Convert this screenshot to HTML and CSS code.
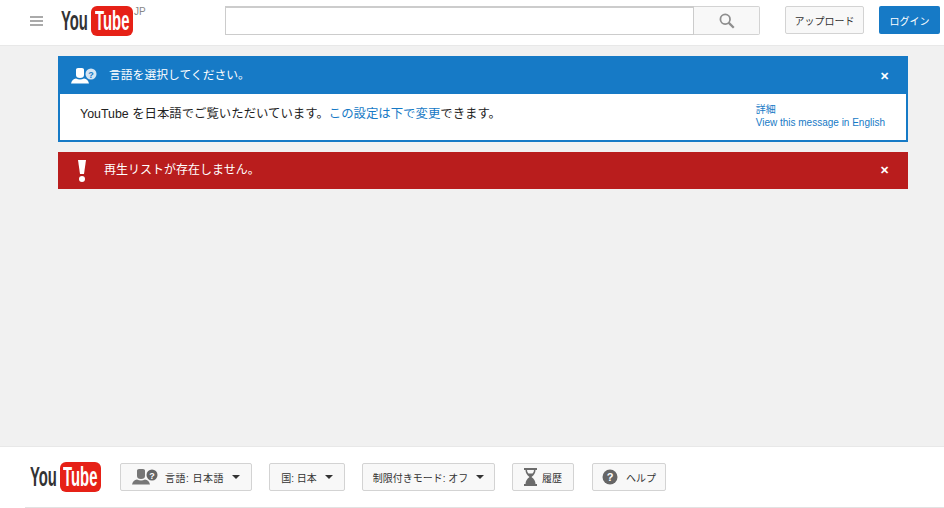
FILE: index.html
```html
<!DOCTYPE html>
<html lang="ja">
<head>
    <meta charset="UTF-8">
    <meta name="viewport" content="width=device-width, initial-scale=1.0">
    <title>YouTube</title>
    <link rel="stylesheet" href="styles.css">
</head>
<body>
    <header class="masthead">
        <div class="guide-icon"><span></span><span></span><span></span></div>
        <a class="logo logo-top" href="#">
            <span class="logo-you"><b>You</b></span><span class="logo-tube"><b>Tube</b></span>
        </a>
        <span class="country">JP</span>
        <form class="search">
            <input class="search-input" type="text">
            <button class="search-btn" type="button">
                <svg width="16" height="16" viewBox="0 0 18 18"><circle cx="7" cy="7" r="5.4" fill="none" stroke="#8e8e8e" stroke-width="2"/><path d="M10.8 10.8 L16.6 16.6" stroke="#8e8e8e" stroke-width="2.6"/></svg>
            </button>
        </form>
        <button class="btn upload-btn">アップロード</button>
        <button class="login-btn">ログイン</button>
    </header>

    <main class="content">
        <div class="notice notice-lang">
            <div class="notice-head">
                <svg class="lang-icon" width="26" height="16" viewBox="0 0 26 16">
                    <path d="M5 1.5 Q5 0 7 0 H11 Q13 0 13 1.5 V7 Q13 10 9 10 Q5 10 5 7 Z M0 15.5 Q1 11 5 10.5 Q9 12.5 13 10.5 Q17 11 18 15.5 Z" fill="#fff"/>
                    <circle cx="20" cy="6" r="5.5" fill="#d5e5f3"/>
                    <text x="20" y="9.5" class="lang-q">?</text>
                </svg>
                <span class="notice-title">言語を選択してください。</span>
                <span class="close">&#10005;</span>
            </div>
            <div class="notice-body">
                <p class="notice-msg">YouTube を日本語でご覧いただいています。<a href="#">この設定は下で変更</a>できます。</p>
                <div class="notice-links">
                    <a href="#">詳細</a>
                    <a href="#">View this message in English</a>
                </div>
            </div>
        </div>

        <div class="notice notice-error">
            <svg class="error-icon" width="8" height="22" viewBox="0 0 8 22"><path d="M0 0 H8 L6 14 H2 Z" fill="#fff"/><circle cx="4" cy="19" r="3" fill="#fff"/></svg>
            <span class="notice-title">再生リストが存在しません。</span>
            <span class="close">&#10005;</span>
        </div>
    </main>

    <footer class="footer">
        <div class="footer-row">
            <a class="logo logo-foot" href="#">
                <span class="logo-you"><b>You</b></span><span class="logo-tube"><b>Tube</b></span>
            </a>
            <button class="btn foot-btn lang-btn">
                <svg width="26" height="16" viewBox="0 0 26 16">
                    <path d="M5 1.5 Q5 0 7 0 H11 Q13 0 13 1.5 V7 Q13 10 9 10 Q5 10 5 7 Z M0 15.5 Q1 11 5 10.5 Q9 12.5 13 10.5 Q17 11 18 15.5 Z" fill="#777"/>
                    <circle cx="20" cy="6" r="5.5" fill="#666"/>
                    <text x="20" y="9.5" class="lang-q lang-q-foot">?</text>
                </svg>
                <span class="lang-label">言語: 日本語</span><i class="caret"></i>
            </button>
            <button class="btn foot-btn country-btn"><span>国: 日本</span><i class="caret"></i></button>
            <button class="btn foot-btn safety-btn"><span>制限付きモード: オフ</span><i class="caret"></i></button>
            <button class="btn foot-btn history-btn">
                <svg width="13" height="18" viewBox="0 0 13 18"><path d="M0 0 H13 V2 H11.5 Q11.5 6 7.5 9 Q11.5 12 11.5 16 H13 V18 H0 V16 H1.5 Q1.5 12 5.5 9 Q1.5 6 1.5 2 H0 Z" fill="#6b6b6b"/><path d="M3 2 H10 Q10 4 8.5 5.5 H4.5 Q3 4 3 2 Z" fill="#f8f8f8"/></svg>
                <span>履歴</span>
            </button>
            <button class="btn foot-btn help-btn">
                <svg width="16" height="16" viewBox="0 0 16 16"><circle cx="8" cy="8" r="7.5" fill="#666"/><text x="8" y="12" class="help-q">?</text></svg>
                <span>ヘルプ</span>
            </button>
        </div>
        <div class="footer-rule"></div>
    </footer>
</body>
</html>
```

FILE: styles.css
```css
* {
    margin: 0;
    padding: 0;
    box-sizing: border-box;
}

html, body {
    height: 100%;
    overflow: hidden;
}

body {
    font-family: "Liberation Sans", "Noto Sans CJK JP", sans-serif;
    font-size: 11px;
    color: #333;
    background-color: #f1f1f1;
    display: flex;
    flex-direction: column;
}

a {
    color: #167ac6;
    text-decoration: none;
}

.masthead {
    height: 46px;
    flex: none;
    background: #fff;
    border-bottom: 1px solid #e8e8e8;
    display: flex;
    align-items: flex-start;
}

.guide-icon {
    width: 13px;
    margin: 16px 18px 0 30px;
    display: flex;
    flex-direction: column;
    gap: 2px;
}

.guide-icon span {
    height: 2px;
    background: #aaa;
}

/* logo words are squeezed with a transform, no narrow font is installed */
.logo {
    display: flex;
    height: 30px;
    font-size: 27px;
    font-weight: bold;
    white-space: nowrap;
}

.logo b {
    display: inline-block;
    transform: scaleX(0.55);
}

.logo-you {
    width: 29px;
    line-height: 30px;
    color: #333;
}

.logo-you b {
    transform-origin: left center;
}

.logo-tube {
    width: 42px;
    margin-left: 1px;
    line-height: 30px;
    color: #fff;
    background: #e62117;
    border-radius: 6px;
    display: flex;
    justify-content: center;
}

.logo-tube b {
    flex: none;
}

.logo-top {
    margin-top: 6px;
}

.country {
    margin: 6px 0 0 1px;
    width: 91px;
    font-size: 10px;
    color: #888;
}

.search {
    display: flex;
    width: 535px;
    height: 29px;
    margin-top: 6px;
}

.search-input {
    flex: 1;
    border: 1px solid #ccc;
    border-width: 2px 1px 1px 1px;
    background: #fff;
    min-width: 0;
}

.search-btn {
    width: 66px;
    background: #f8f8f8;
    border: 1px solid #d3d3d3;
    border-left: none;
    border-radius: 0 2px 2px 0;
    display: flex;
    align-items: center;
    justify-content: center;
}

.btn {
    font-family: inherit;
    font-size: 10px;
    color: #333;
    background: #f8f8f8;
    border: 1px solid #d3d3d3;
    border-radius: 2px;
    height: 28px;
    display: flex;
    align-items: center;
    justify-content: center;
}

.upload-btn {
    width: 79px;
    margin: 6px 0 0 25px;
}

.login-btn {
    width: 61px;
    height: 28px;
    margin: 6px 0 0 15px;
    font-family: inherit;
    font-size: 10px;
    color: #fff;
    background: #167ac6;
    border: none;
    border-radius: 2px;
}

.content {
    flex: 1;
    padding: 10px 36px 0 58px;
    display: flex;
    flex-direction: column;
    gap: 10px;
}

.notice-lang {
    border: 2px solid #167ac6;
    background: #fff;
    height: 86px;
}

.notice-head {
    height: 36px;
    background: #167ac6;
    display: flex;
    align-items: center;
    padding: 0 17px 0 11px;
}

.lang-icon {
    margin-right: 12px;
}

.lang-q {
    font-family: "Liberation Sans", sans-serif;
    font-size: 9px;
    font-weight: bold;
    text-anchor: middle;
    fill: #167ac6;
}

.lang-q-foot {
    fill: #fff;
}

.notice-title {
    flex: 1;
    font-size: 11.8px;
    line-height: 16px;
    color: #fff;
}

.notice-head .notice-title {
    margin-bottom: 2px;
}

.notice-error .notice-title {
    margin-bottom: 2px;
    font-size: 12px;
}

.close {
    font-size: 11px;
    font-weight: bold;
    color: #fff;
}

.notice-body {
    display: flex;
    justify-content: space-between;
    padding: 10px 21px 0 20px;
}

.notice-msg {
    font-size: 12.4px;
    line-height: 20px;
    color: #222;
}

.notice-links {
    display: flex;
    flex-direction: column;
    margin-top: -1px;
    font-size: 10px;
    line-height: 13px;
}

.notice-error {
    height: 37px;
    background: #b91d1d;
    display: flex;
    align-items: center;
    padding: 0 19px 0 20px;
}

.error-icon {
    margin-right: 18px;
}

.footer {
    height: 62px;
    flex: none;
    background: #fff;
    border-top: 1px solid #e8e8e8;
    padding: 15px 0 0 30px;
    display: flex;
    flex-direction: column;
}

.footer-row {
    display: flex;
    align-items: center;
}

.logo-foot {
    margin-right: 19px;
}

.logo-foot .logo-tube {
    width: 41px;
}

.foot-btn {
    gap: 8px;
}

.lang-btn {
    width: 132px;
    gap: 7px;
}

.lang-label {
    letter-spacing: 0.5px;
    margin-right: 1px;
}

.country-btn {
    width: 76px;
    margin-left: 17px;
}

.safety-btn {
    width: 133px;
    margin-left: 17px;
}

.history-btn {
    width: 62px;
    margin-left: 17px;
    gap: 5px;
}

.help-btn {
    width: 74px;
    margin-left: 18px;
}

.help-q {
    font-family: "Liberation Sans", sans-serif;
    font-size: 11px;
    font-weight: bold;
    text-anchor: middle;
    fill: #fff;
}

.caret {
    border: 4px solid transparent;
    border-top: 4px solid #333;
    border-bottom: none;
}

.footer-rule {
    height: 1px;
    background: #e2e2e2;
    margin: 15px 0 0 -5px;
}
```
